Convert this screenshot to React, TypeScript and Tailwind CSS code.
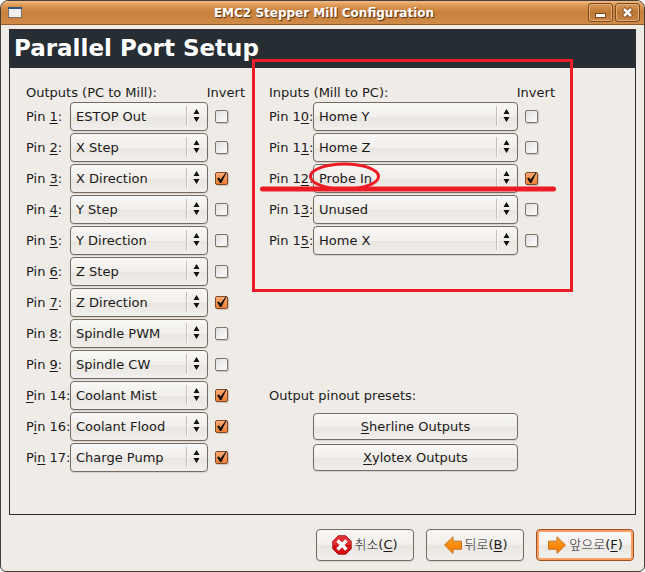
import { useState } from "react";
import type { ReactNode } from "react";
import clsx from "clsx";

type Pin = {
  id: string;
  // label is split around the mnemonic letter
  label: [string, string, string];
  signal: string;
  inverted?: boolean;
};

const outputs: Pin[] = [
  { id: "pin1", label: ["Pin ", "1", ":"], signal: "ESTOP Out" },
  { id: "pin2", label: ["Pin ", "2", ":"], signal: "X Step" },
  { id: "pin3", label: ["Pin ", "3", ":"], signal: "X Direction", inverted: true },
  { id: "pin4", label: ["Pin ", "4", ":"], signal: "Y Step" },
  { id: "pin5", label: ["Pin ", "5", ":"], signal: "Y Direction" },
  { id: "pin6", label: ["Pin ", "6", ":"], signal: "Z Step" },
  { id: "pin7", label: ["Pin ", "7", ":"], signal: "Z Direction", inverted: true },
  { id: "pin8", label: ["Pin ", "8", ":"], signal: "Spindle PWM" },
  { id: "pin9", label: ["Pin ", "9", ":"], signal: "Spindle CW" },
  { id: "pin14", label: ["", "P", "in 14:"], signal: "Coolant Mist", inverted: true },
  { id: "pin16", label: ["P", "i", "n 16:"], signal: "Coolant Flood", inverted: true },
  { id: "pin17", label: ["Pi", "n", " 17:"], signal: "Charge Pump", inverted: true },
];

const inputs: Pin[] = [
  { id: "pin10", label: ["Pin 1", "0", ":"], signal: "Home Y" },
  { id: "pin11", label: ["Pin 1", "1", ":"], signal: "Home Z" },
  { id: "pin12", label: ["Pin 1", "2", ":"], signal: "Probe In", inverted: true },
  { id: "pin13", label: ["Pin 1", "3", ":"], signal: "Unused" },
  { id: "pin15", label: ["Pin 1", "5", ":"], signal: "Home X" },
];

const outputSignals = outputs.map((pin) => pin.signal);
const inputSignals = inputs.map((pin) => pin.signal);

const face =
  "border border-[#756b60] bg-[linear-gradient(#f9f8f6,#f1eeeb_50%,#e9e6e1_52%,#f1efec)] shadow-[0_1px_1px_#d5d1cb]";

function Mnemonic({ parts }: { parts: [string, string, string] }) {
  return (
    <span className="whitespace-pre">
      {parts[0]}
      <span className="underline underline-offset-2">{parts[1]}</span>
      {parts[2]}
    </span>
  );
}

function PinRow({ pin, signals }: { pin: Pin; signals: string[] }) {
  const [signal, setSignal] = useState(pin.signal);
  const [inverted, setInverted] = useState(Boolean(pin.inverted));

  return (
    <div className="flex h-[29px] items-center">
      <label htmlFor={pin.id} className="w-11 shrink-0">
        <Mnemonic parts={pin.label} />
      </label>
      <div className="relative h-full flex-1">
        <select
          id={pin.id}
          value={signal}
          onChange={(e) => setSignal(e.target.value)}
          className={clsx("h-full w-full appearance-none rounded-[4px] pr-6 pl-[5px]", face)}
        >
          {signals.map((name) => (
            <option key={name}>{name}</option>
          ))}
        </select>
        <svg
          viewBox="0 0 22 29"
          className="pointer-events-none absolute top-0 right-0 h-[29px] w-[22px]"
          aria-hidden="true"
        >
          <path d="M.5 4v20" stroke="#c3beb7" />
          <path d="M1.5 4v20" stroke="#fbfaf9" />
          <path d="M10.5 7l3 5h-6zM10.5 20l3-5h-6z" fill="#111" />
        </svg>
      </div>
      <div className="relative mr-[17px] ml-[7px] size-[13px]">
        <input
          type="checkbox"
          aria-label="Invert"
          checked={inverted}
          onChange={(e) => setInverted(e.target.checked)}
          className={clsx(
            "block size-[13px] appearance-none rounded-[2px] border shadow-[1px_1px_1px_#c9c4bd]",
            inverted
              ? "border-[#7d4a2a] bg-[linear-gradient(#ffab73,#f07f35)]"
              : "border-[#7d756c] bg-[linear-gradient(135deg,#e2e0de,#fdfdfd)]"
          )}
        />
        {inverted && (
          <svg
            viewBox="0 0 13 13"
            className="pointer-events-none absolute inset-0 size-[13px] overflow-visible"
            aria-hidden="true"
          >
            <path d="M2 6.2l2-.8 1.5 2.2L11 .2l.6.4L6.4 11H5z" fill="#111" />
          </svg>
        )}
      </div>
    </div>
  );
}

function PinGroup({ title, pins, signals }: { title: string; pins: Pin[]; signals: string[] }) {
  return (
    <section>
      <div className="flex h-[18px] items-center justify-between">
        <h2>{title}</h2>
        <span>Invert</span>
      </div>
      <div className="flex flex-col gap-0.5">
        {pins.map((pin) => (
          <PinRow key={pin.id} pin={pin} signals={signals} />
        ))}
      </div>
    </section>
  );
}

function TitleButton({ label, children }: { label: string; children: ReactNode }) {
  return (
    <button
      type="button"
      aria-label={label}
      className="flex h-[19px] w-[25px] items-center justify-center rounded-[3px] border border-[#7a4a1e] bg-[linear-gradient(#d9995a,#bb7834_50%,#c98440)] shadow-[inset_0_0_0_1px_#e2ad78]"
    >
      {children}
    </button>
  );
}

function DialogButton({
  text,
  mnemonic,
  focused,
  children,
}: {
  text: string;
  mnemonic: string;
  focused?: boolean;
  children: ReactNode;
}) {
  return (
    <button
      type="button"
      className={clsx(
        "flex h-8 w-[98px] items-center justify-center gap-0.5 rounded-[4px]",
        focused
          ? "border border-[#9c4f22] bg-[linear-gradient(#fbfaf9,#f3f0ed_50%,#eae7e3_52%,#f3f1ee)] shadow-[inset_0_0_0_2px_#ff9f63]"
          : face
      )}
    >
      {children}
      <span>
        <span className="font-light">{text}</span>
        <Mnemonic parts={["(", mnemonic, ")"]} />
      </span>
    </button>
  );
}

function Arrow({ forward }: { forward?: boolean }) {
  return (
    <svg viewBox="0 0 20 20" className={clsx("size-5", forward && "-scale-x-100")} aria-hidden="true">
      <defs>
        <linearGradient id={forward ? "fwd" : "back"} x2="0" y2="1">
          <stop offset="0" stopColor="#ffab40" />
          <stop offset=".5" stopColor="#f98a0a" />
          <stop offset="1" stopColor="#f07c00" />
        </linearGradient>
      </defs>
      <path
        d="M1.5 10L10 1.8v4.4h8.5v8H10v4.2z"
        fill={forward ? "url(#fwd)" : "url(#back)"}
        stroke="#c8701c"
        strokeLinejoin="round"
      />
    </svg>
  );
}

// Red pen marks drawn over the inputs group
function Highlight() {
  return (
    <svg
      viewBox="0 0 321 233"
      className="pointer-events-none absolute -top-[25px] -left-[17px] h-[233px] w-[321px]"
      fill="none"
      stroke="#ed1c24"
      aria-hidden="true"
    >
      <rect x="1.5" y="1.5" width="318" height="230" strokeWidth="3" />
      <ellipse cx="92.5" cy="117.5" rx="34" ry="12.5" strokeWidth="3" />
      <path d="M10.5 130h291" strokeWidth="5" strokeLinecap="round" />
    </svg>
  );
}

export default function App() {
  return (
    <div className="min-h-screen bg-white">
      <div className="flex min-h-screen flex-col overflow-hidden rounded-t-lg rounded-b-md border border-[#463d36] bg-[#efebe7] font-['DejaVu_Sans','Noto_Sans_CJK_KR',sans-serif] text-[13px] leading-[18px] text-[#1a1a1a]">
        <header className="flex h-6 items-center border-b border-[#8f5a26] bg-[linear-gradient(#efb987,#dd9651_20%,#c8813d_50%,#d08b48)] pr-1 pl-[7px]">
          <div className="w-[52px]">
            <svg viewBox="0 0 14 11" className="h-[11px] w-[14px]" aria-hidden="true">
              <rect x=".5" y=".5" width="13" height="10" fill="#efefef" stroke="#77706a" />
              <path d="M0 1h14" stroke="#2e5580" strokeWidth="2" />
            </svg>
          </div>
          <h1 className="flex-1 text-center text-xs font-bold text-white [text-shadow:1px_1px_1px_#4a2b0e]">
            EMC2 Stepper Mill Configuration
          </h1>
          <div className="flex gap-0.5">
            <TitleButton label="Minimize">
              <svg viewBox="0 0 11 11" className="size-[11px]" aria-hidden="true">
                <rect x=".5" y="6.5" width="10" height="4" fill="#fff" stroke="#7a4a1e" />
              </svg>
            </TitleButton>
            <TitleButton label="Close">
              <svg viewBox="0 0 11 11" className="size-[11px]" aria-hidden="true">
                <path d="M1.5 1.5l8 8M9.5 1.5l-8 8" stroke="#7a4a1e" strokeWidth="4.4" />
                <path d="M2 2l7 7M9 2l-7 7" stroke="#fff" strokeWidth="2.6" />
              </svg>
            </TitleButton>
          </div>
        </header>

        <main className="mx-2 mt-1 flex flex-1 flex-col border border-[#262d33]">
          <div className="flex h-[38px] items-center bg-[#262d33] pb-0.5 pl-1 text-[23px] font-bold text-white">
            Parallel Port Setup
          </div>
          <div className="flex gap-6 px-4 pt-4 pb-10">
            <div className="w-[219px]">
              <PinGroup title="Outputs (PC to Mill):" pins={outputs} signals={outputSignals} />
            </div>
            <div className="relative flex w-[286px] flex-col justify-between pb-px">
              <PinGroup title="Inputs (Mill to PC):" pins={inputs} signals={inputSignals} />
              <section>
                <h2 className="mb-2">Output pinout presets:</h2>
                <div className="mr-[37px] ml-11 flex flex-col gap-1">
                  <button type="button" className={clsx("h-[27px] rounded-[4px]", face)}>
                    <Mnemonic parts={["", "S", "herline Outputs"]} />
                  </button>
                  <button type="button" className={clsx("h-[27px] rounded-[4px]", face)}>
                    <Mnemonic parts={["", "X", "ylotex Outputs"]} />
                  </button>
                </div>
              </section>
              <Highlight />
            </div>
          </div>
        </main>

        <footer className="flex justify-end gap-3 px-2.5 pt-3.5 pb-2.5">
          <DialogButton text="취소" mnemonic="C">
            <svg viewBox="0 0 20 20" className="size-5" aria-hidden="true">
              <path
                d="M6.2.8h7.6l5.4 5.4v7.6l-5.4 5.4H6.2L.8 13.8V6.2z"
                fill="#d40f14"
                stroke="#b01015"
                strokeLinejoin="round"
              />
              <path d="M6.2.8h7.6l5.4 5.4V10H.8V6.2z" fill="#e8494b" opacity=".6" />
              <path d="M5.5 5.5l9 9M14.5 5.5l-9 9" stroke="#fff" strokeWidth="3.4" />
            </svg>
          </DialogButton>
          <DialogButton text="뒤로" mnemonic="B">
            <Arrow />
          </DialogButton>
          <DialogButton text="앞으로" mnemonic="F" focused>
            <Arrow forward />
          </DialogButton>
        </footer>
      </div>
    </div>
  );
}
